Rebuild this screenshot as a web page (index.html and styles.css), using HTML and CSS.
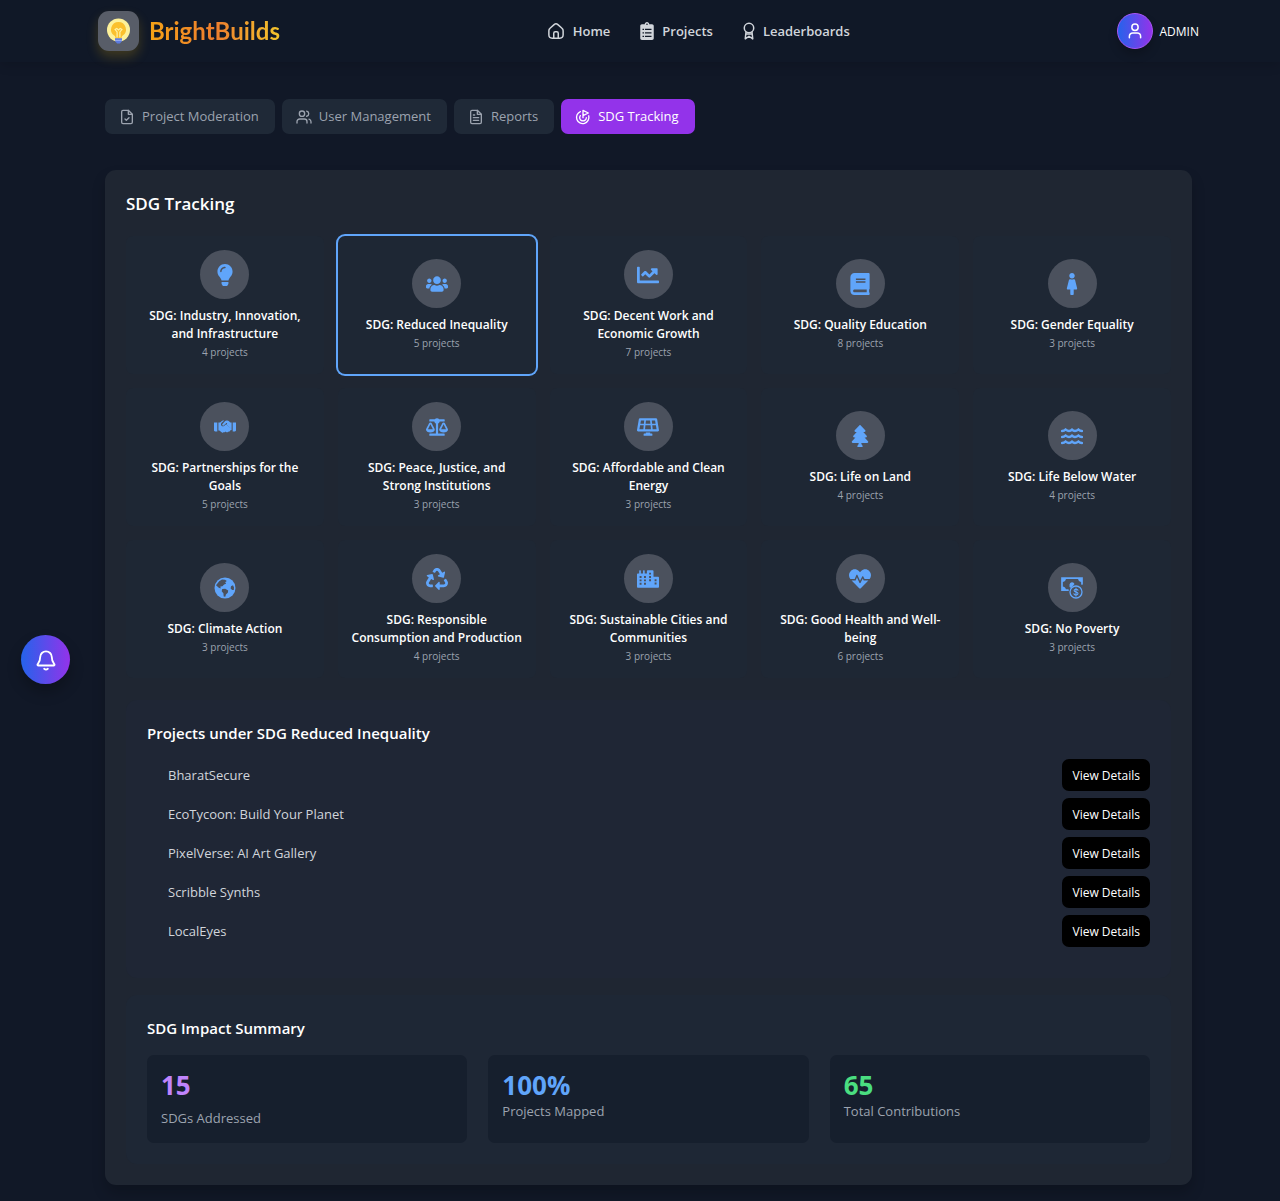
FILE: index.html
```html
<!DOCTYPE html>
<html lang="en">
<head>
<meta charset="utf-8">
<meta name="viewport" content="width=device-width, initial-scale=1">
<title>BrightBuilds – SDG Tracking</title>
<link rel="stylesheet" href="styles.css">
</head>
<body>
<header class="topbar">
  <a class="brand" href="#">
    <span class="brand-mark">
      <svg viewBox="0 0 26 26" width="26" height="26" aria-hidden="true">
        <circle cx="12.500" cy="12" r="11.500" fill="#fdf19a"/>
        <path d="M12.500 4a7.500 7.500 0 0 0-4.300 13.600c1 .8 1.300 1.500 1.300 2.900h6c0-1.400.3-2.100 1.300-2.900A7.500 7.500 0 0 0 12.500 4z" fill="#fbc02d"/>
        <path d="M11.100 19.500V14l-2-2.500 1.700-1 1.700 1.500 1.700-1.500 1.700 1-2 2.500v5.500" fill="none" stroke="#fff3a6" stroke-width="1.200"/>
        <path d="M9 20.200h7v2.800l-2 2.500h-3l-2-2.500z" fill="#5c7be0"/>
        <path d="M9 22.400h7" stroke="#a9b9f2" stroke-width=".8"/>
      </svg>
    </span>
    <span class="brand-name">BrightBuilds</span>
  </a>
  <nav class="nav">
    <a href="#"><svg class="line" viewBox="0 0 24 24" width="18" height="18" aria-hidden="true"><path d="M2.500 11.500c0-1.400.4-2.200 1.500-3.100l5.500-4.900c1.600-1.400 3.400-1.400 5 0L20 8.400c1.100.9 1.500 1.700 1.500 3.100V17c0 3-1.200 4.500-4.500 4.500H7c-3.300 0-4.500-1.500-4.500-4.500z"/><path d="M9 21.500V15c0-1.400.7-2 2-2h2c1.300 0 2 .6 2 2v6.500"/></svg>Home</a>
    <a href="#"><svg viewBox="0 0 384 512" width="14" height="18" aria-hidden="true"><path fill="currentColor" fill-rule="evenodd" d="M336 64h-80c0-35.300-28.700-64-64-64s-64 28.700-64 64H48C21.500 64 0 85.500 0 112v352c0 26.500 21.500 48 48 48h288c26.500 0 48-21.500 48-48V112c0-26.500-21.500-48-48-48zM192 40c13.300 0 24 10.700 24 24s-10.700 24-24 24-24-10.700-24-24 10.700-24 24-24zM64 190h44v36H64zm72 0h184v36H136zM64 290h44v36H64zm72 0h184v36H136zM64 390h44v36H64zm72 0h184v36H136z"/></svg>Projects</a>
    <a href="#"><svg class="line" viewBox="0 0 16 24" width="12" height="18" aria-hidden="true"><circle cx="8" cy="8" r="6.300"/><path d="M4 13.500 3 22.500l5-3.500 5 3.500-1-9M4 16h8"/></svg>Leaderboards</a>
  </nav>
  <a class="account" href="#">
    <span class="avatar"><svg class="line" viewBox="0 0 24 24" width="18" height="18" aria-hidden="true"><circle cx="12" cy="7" r="4.200"/><path d="M4.500 21v-2a4.500 4.500 0 0 1 4.500-4.500h6a4.500 4.500 0 0 1 4.500 4.500v2"/></svg></span>
    ADMIN
  </a>
</header>

<main class="page">
  <div class="tabs">
    <button class="tab" type="button"><svg class="line" viewBox="0 0 24 24" width="16" height="16" aria-hidden="true"><path d="M14 2H6a2 2 0 0 0-2 2v16a2 2 0 0 0 2 2h12a2 2 0 0 0 2-2V8z"/><path d="M14 2v6h6M9 15l2 2 4-4"/></svg>Project Moderation</button>
    <button class="tab" type="button"><svg class="line" viewBox="0 0 24 24" width="16" height="16" aria-hidden="true"><circle cx="9" cy="7" r="4"/><path d="M1.500 21v-2a4 4 0 0 1 4-4h7a4 4 0 0 1 4 4v2M22.500 21v-2a4 4 0 0 0-3-3.900M16 3.100a4 4 0 0 1 0 7.800"/></svg>User Management</button>
    <button class="tab" type="button"><svg class="line" viewBox="0 0 24 24" width="16" height="16" aria-hidden="true"><path d="M14 2H6a2 2 0 0 0-2 2v16a2 2 0 0 0 2 2h12a2 2 0 0 0 2-2V8z"/><path d="M14 2v6h6M8 9h2M8 13h8M8 17h8"/></svg>Reports</button>
    <button class="tab tab-active" type="button"><svg class="line" viewBox="0 0 24 24" width="16" height="16" aria-hidden="true"><path d="M12 13V2l8 4-8 4"/><path d="M20.600 10.200a9.300 9.300 0 1 1-12.500-6.300"/><path d="M8 9.900A5 5 0 1 0 17 13"/></svg>SDG Tracking</button>
  </div>

  <section class="panel">
    <h1>SDG Tracking</h1>
    <div class="goals">
      <button class="goal" type="button"><span class="disc"><svg viewBox="0 0 352 512" aria-hidden="true"><path d="M96.060 454.350c.01 6.290 1.870 12.450 5.360 17.690l17.090 25.690a31.990 31.990 0 0 0 26.640 14.280h61.710a31.990 31.990 0 0 0 26.640-14.280l17.090-25.690a31.989 31.989 0 0 0 5.360-17.690l.04-38.350H96.010l.05 38.350zM0 176c0 44.370 16.450 84.850 43.560 115.780 16.520 18.850 42.360 58.230 52.210 91.450.04.26.07.52.11.78h160.240c.04-.26.07-.51.11-.78 9.850-33.220 35.690-72.600 52.210-91.450C335.550 260.850 352 220.370 352 176 352 78.610 272.910-.3 175.450 0 73.440.31 0 82.970 0 176zm176-80c-44.110 0-80 35.890-80 80 0 8.840-7.160 16-16 16s-16-7.160-16-16c0-61.760 50.240-112 112-112 8.840 0 16 7.160 16 16s-7.160 16-16 16z"/></svg></span><span class="goal-name">SDG: Industry, Innovation, and Infrastructure</span><span class="goal-count">4 projects</span></button>
      <button class="goal goal-selected" type="button"><span class="disc"><svg viewBox="0 0 640 512" aria-hidden="true"><path d="M96 224c35.300 0 64-28.700 64-64s-28.700-64-64-64-64 28.700-64 64 28.700 64 64 64zm448 0c35.300 0 64-28.700 64-64s-28.700-64-64-64-64 28.700-64 64 28.700 64 64 64zm32 32h-64c-17.600 0-33.500 7.100-45.100 18.600 40.300 22.100 68.900 62 75.100 109.400h66c17.700 0 32-14.300 32-32v-32c0-35.300-28.700-64-64-64zm-256 0c61.900 0 112-50.100 112-112S381.900 32 320 32 208 82.100 208 144s50.100 112 112 112zm76.800 32h-8.300c-20.800 10-43.900 16-68.500 16s-47.600-6-68.500-16h-8.300C179.600 288 128 339.600 128 403.200V432c0 26.500 21.500 48 48 48h288c26.500 0 48-21.500 48-48v-28.800c0-63.600-51.600-115.200-115.200-115.200zm-223.700-13.400C161.500 263.100 145.600 256 128 256H64c-35.300 0-64 28.700-64 64v32c0 17.700 14.300 32 32 32h65.900c6.300-47.400 34.900-87.300 75.200-109.400z"/></svg></span><span class="goal-name">SDG: Reduced Inequality</span><span class="goal-count">5 projects</span></button>
      <button class="goal" type="button"><span class="disc"><svg viewBox="0 0 512 512" aria-hidden="true"><path d="M496 384H64V80c0-8.840-7.160-16-16-16H16C7.160 64 0 71.160 0 80v336c0 17.670 14.330 32 32 32h464c8.840 0 16-7.160 16-16v-32c0-8.840-7.160-16-16-16zM464 96H345.940c-21.380 0-32.090 25.850-16.970 40.970l32.400 32.400L288 242.750l-73.370-73.370c-12.500-12.500-32.760-12.500-45.250 0l-68.690 68.690c-6.250 6.250-6.250 16.380 0 22.630l22.620 22.620c6.250 6.250 16.380 6.250 22.630 0L192 237.250l73.370 73.370c12.500 12.500 32.760 12.500 45.250 0l96-96 32.400 32.400c15.120 15.120 40.970 4.410 40.970-16.970V112c.01-8.840-7.150-16-15.990-16z"/></svg></span><span class="goal-name">SDG: Decent Work and Economic Growth</span><span class="goal-count">7 projects</span></button>
      <button class="goal" type="button"><span class="disc"><svg viewBox="0 0 448 512" aria-hidden="true"><path d="M448 360V24c0-13.300-10.700-24-24-24H96C43 0 0 43 0 96v320c0 53 43 96 96 96h328c13.300 0 24-10.700 24-24v-16c0-7.500-3.500-14.300-8.900-18.700-4.200-15.400-4.200-59.300 0-74.700 5.400-4.300 8.900-11.100 8.900-18.600zM128 134c0-3.300 2.700-6 6-6h212c3.300 0 6 2.700 6 6v20c0 3.300-2.700 6-6 6H134c-3.300 0-6-2.700-6-6v-20zm0 64c0-3.300 2.700-6 6-6h212c3.300 0 6 2.700 6 6v20c0 3.300-2.700 6-6 6H134c-3.300 0-6-2.700-6-6v-20zm253.400 250H96c-17.700 0-32-14.300-32-32 0-17.600 14.400-32 32-32h285.400c-1.900 17.100-1.900 46.900 0 64z"/></svg></span><span class="goal-name">SDG: Quality Education</span><span class="goal-count">8 projects</span></button>
      <button class="goal" type="button"><span class="disc"><svg viewBox="0 0 256 512" aria-hidden="true"><path d="M128 0c35.346 0 64 28.654 64 64s-28.654 64-64 64c-35.346 0-64-28.654-64-64S92.654 0 128 0m119.283 354.179l-48-192A24 24 0 0 0 176 144h-11.360c-22.711 10.443-49.590 10.894-73.280 0H80a24 24 0 0 0-23.283 18.179l-48 192C4.935 369.305 16.383 384 32 384h56v104c0 13.255 10.745 24 24 24h32c13.255 0 24-10.745 24-24V384h56c15.591 0 27.071-14.671 23.283-29.821z"/></svg></span><span class="goal-name">SDG: Gender Equality</span><span class="goal-count">3 projects</span></button>

      <button class="goal" type="button"><span class="disc"><svg viewBox="0 0 640 512" aria-hidden="true"><path d="M0 128h96v256H32c-18 0-32-14-32-32zM544 128h96v224c0 18-14 32-32 32h-64z"/><path d="M128 128h48l64-52c12-8 24-12 38-12h20l-76 70c-24 22-26 60-4 84 22 22 58 26 82 4l50-46 152 124c14 12 16 32 4 46-10 12-26 14-38 8 2 14-4 28-18 34-14 8-28 4-38-4-4 14-18 26-34 26-10 0-20-4-28-10l-14-10c-12 16-34 20-52 10-8 22-34 30-54 18l-74-58h-28z"/><path d="M324 84c8-12 24-20 40-20h26c14 0 28 6 38 16l48 48h36v176h-14L362 182l14-12c14-14-6-36-22-24l-72 64c-12 10-28 8-38-2-10-12-10-28 2-40z"/></svg></span><span class="goal-name">SDG: Partnerships for the Goals</span><span class="goal-count">5 projects</span></button>
      <button class="goal" type="button"><span class="disc"><svg viewBox="0 0 640 512" aria-hidden="true"><path d="M256 336h-.02c0-16.180 1.340-8.730-85.050-181.510-17.650-35.290-68.190-35.360-85.870 0C-2.060 328.750.02 320.330.02 336H0c0 44.180 57.310 80 128 80s128-35.820 128-80zM128 176l72 144H56l72-144zm511.980 160c0-16.180 1.340-8.730-85.050-181.510-17.650-35.290-68.190-35.360-85.870 0-87.120 174.260-85.040 165.840-85.040 181.510H384c0 44.180 57.310 80 128 80s128-35.820 128-80h-.02zM440 320l72-144 72 144H440zm88 128H352V153.250c23.510-10.290 41.160-31.480 46.390-57.250H528c8.840 0 16-7.160 16-16V48c0-8.840-7.160-16-16-16H383.640C369.040 12.680 346.090 0 320 0s-49.040 12.680-63.640 32H112c-8.840 0-16 7.160-16 16v32c0 8.840 7.160 16 16 16h129.610c5.230 25.760 22.870 46.960 46.390 57.250V448H112c-8.840 0-16 7.160-16 16v32c0 8.840 7.160 16 16 16h416c8.840 0 16-7.160 16-16v-32c0-8.840-7.160-16-16-16z"/></svg></span><span class="goal-name">SDG: Peace, Justice, and Strong Institutions</span><span class="goal-count">3 projects</span></button>
      <button class="goal" type="button"><span class="disc"><svg viewBox="0 0 640 512" aria-hidden="true"><path d="M431.980 448.010l-47.970.05V416h-128v32.210l-47.980.05c-8.820.01-15.970 7.160-15.980 15.990l-.05 31.730c-.01 8.850 7.170 16.030 16.020 16.020l223.960-.26c8.820-.01 15.970-7.160 15.980-15.980l.04-31.730c.01-8.850-7.170-16.030-16.020-16.020zM585.200 26.740C582.580 11.310 568.990 0 553.060 0H86.930C71 0 57.410 11.310 54.790 26.740-3.320 369.160.04 348.080.03 352c-.03 17.320 14.290 32 32.600 32h574.740c18.230 0 32.510-14.560 32.590-31.790.02-4.080 3.350 16.950-54.760-325.470zM259.830 64h120.330l9.770 96H250.060l9.770-96zm-75.170 256H71.090L90.100 208h105.970l-11.410 112zm16.290-160H98.240l16.290-96h96.190l-9.770 96zm32.820 160l11.400-112h149.650l11.400 112H233.770zm195.500-256h96.190l16.290 96H439.040l-9.770-96zm26.060 256l-11.400-112H549.900l19.010 112H455.330z"/></svg></span><span class="goal-name">SDG: Affordable and Clean Energy</span><span class="goal-count">3 projects</span></button>
      <button class="goal" type="button"><span class="disc"><svg viewBox="0 0 384 512" aria-hidden="true"><path d="M378.310 378.490L298.420 288h30.630c9.010 0 16.980-5 20.780-13.060 3.800-8.040 2.550-17.260-3.280-24.050L268.420 160h28.890c9.100 0 17.300-5.350 20.860-13.610 3.520-8.130 1.860-17.590-4.240-24.080L203.660 4.830c-6.030-6.450-17.280-6.450-23.320 0L70.060 122.310c-6.100 6.490-7.750 15.950-4.240 24.080C69.380 154.650 77.590 160 86.690 160h28.890l-78.140 90.910c-5.810 6.780-7.060 15.990-3.270 24.040C37.970 283 45.930 288 54.950 288h30.630L5.690 378.490c-6 6.790-7.360 16.090-3.560 24.260 3.750 8.050 12 13.250 21.010 13.250H160v24.450l-30.290 48.400c-5.320 10.640 2.420 23.160 14.310 23.160h95.960c11.890 0 19.630-12.520 14.310-23.160L224 440.450V416h136.860c9.010 0 17.260-5.200 21.010-13.250 3.800-8.170 2.440-17.470-3.560-24.260z"/></svg></span><span class="goal-name">SDG: Life on Land</span><span class="goal-count">4 projects</span></button>
      <button class="goal" type="button"><span class="disc"><svg viewBox="0 0 22 20" aria-hidden="true"><path class="stroke" stroke-width="2.400" d="M1 5c1.500 0 2.500-.4 3.500-1.400C6 4.600 7 5 8 5s2-.4 3-1.400C12 4.600 13 5 14 5s2-.4 3.500-1.400C18.500 4.600 19.500 5 21 5M1 11c1.500 0 2.500-.4 3.500-1.400C6 10.600 7 11 8 11s2-.4 3-1.400c1 1 2 1.400 3 1.400s2-.4 3.500-1.400c1 1 2 1.400 3.500 1.400M1 17c1.500 0 2.500-.4 3.500-1.400C6 16.600 7 17 8 17s2-.4 3-1.400c1 1 2 1.400 3 1.400s2-.4 3.500-1.400c1 1 2 1.400 3.500 1.400"/></svg></span><span class="goal-name">SDG: Life Below Water</span><span class="goal-count">4 projects</span></button>

      <button class="goal" type="button"><span class="disc"><svg viewBox="0 0 22 22" aria-hidden="true"><circle cx="11" cy="11" r="10.500"/><path class="cut" d="M5.200 4.200 8 2.600l3 .2 1.800 1.300-1.600 1.100.9 1.500-2 .8-1.700 1.800-2 .3.300 1.900-1.900-.7L2 8.200zM8.200 12l3-.2 3 1.600-.4 2.400-1.900 1.600-.6 2.300-1.600-.2-.3-3.300-1.700-2zM17 9.200l2-1 1 2.400-.2 2.300-1.700.2-1.500-1.700z"/></svg></span><span class="goal-name">SDG: Climate Action</span><span class="goal-count">3 projects</span></button>
      <button class="goal" type="button"><span class="disc"><svg viewBox="0 0 512 512" aria-hidden="true"><path d="M184.561 261.903c3.232 13.997-12.123 24.635-24.068 17.168l-40.736-25.455-50.867 81.402C55.606 356.273 70.960 384 96.012 384H148c6.627 0 12 5.373 12 12v40c0 6.627-5.373 12-12 12H96.115c-75.334 0-121.302-83.048-81.408-146.880l50.822-81.388-40.725-25.448c-12.081-7.547-8.966-25.961 4.879-29.158l110.237-25.450c8.611-1.988 17.201 3.381 19.189 11.990l25.452 110.237zm98.561-182.915l41.289 66.076-40.740 25.457c-12.051 7.528-9 25.953 4.879 29.158l110.237 25.450c8.672 1.999 17.215-3.438 19.189-11.990l25.450-110.237c3.197-13.844-11.990-24.719-24.068-17.168l-40.687 25.424-41.263-66.082c-37.521-60.033-125.209-60.171-162.816 0l-17.963 28.766c-3.510 5.620-1.800 13.021 3.820 16.533l33.919 21.195c5.620 3.512 13.024 1.803 16.536-3.817l17.961-28.743c12.712-20.341 41.973-19.676 54.257-.022zM497.288 301.120l-27.515-44.065c-3.511-5.623-10.916-7.334-16.538-3.821l-33.861 21.159c-5.620 3.512-7.330 10.915-3.818 16.536l27.564 44.112c13.257 21.211-2.057 48.960-27.136 48.960H320V336.020c0-14.213-17.242-21.383-27.313-11.313l-80 79.981c-6.249 6.248-6.249 16.379 0 22.627l80 79.989C302.689 517.308 320 510.300 320 495.989V448h95.880c75.274 0 121.335-82.997 81.408-146.880z"/></svg></span><span class="goal-name">SDG: Responsible Consumption and Production</span><span class="goal-count">4 projects</span></button>
      <button class="goal" type="button"><span class="disc"><svg viewBox="0 0 640 512" aria-hidden="true"><path fill-rule="evenodd" d="M616 192H480V24c0-13-11-24-24-24H312c-13 0-24 11-24 24v72h-64V16c0-9-7-16-16-16h-16c-9 0-16 7-16 16v80h-64V16c0-9-7-16-16-16H80c-9 0-16 7-16 16v80H24c-13 0-24 11-24 24v360c0 18 14 32 32 32h576c18 0 32-14 32-32V216c0-13-11-24-24-24zM76 172h56v56H76zm0 96h56v56H76zm0 96h56v56H76zM204 172h56v56h-56zm0 96h56v56h-56zm0 96h56v56h-56zM352 72h56v56h-56zm0 96h56v56h-56zm0 96h56v56h-56zM512 264h56v56h-56zm0 96h56v56h-56z"/></svg></span><span class="goal-name">SDG: Sustainable Cities and Communities</span><span class="goal-count">3 projects</span></button>
      <button class="goal" type="button"><span class="disc"><svg viewBox="0 0 512 512" aria-hidden="true"><path d="M320.200 243.800l-49.700 99.400c-6 12.100-23.400 11.700-28.900-.6l-56.900-126.300-30 71.700H60.600l182.500 186.500c7.100 7.300 18.600 7.300 25.700 0L451.400 288H342.300l-22.100-44.200zM473.700 73.900l-2.400-2.500c-51.500-52.600-135.800-52.600-187.400 0L256 100l-27.900-28.500c-51.500-52.700-135.900-52.700-187.400 0l-2.400 2.400C-10.400 123.700-12.500 203 31 256h102.400l35.900-86.200c5.400-12.900 23.600-13.100 29.200-.4l58.200 129.300 49-97.900c5.900-11.800 22.700-11.800 28.600 0l27.600 55.200H481c43.500-53 41.400-132.300-7.300-182.100z"/></svg></span><span class="goal-name">SDG: Good Health and Well-being</span><span class="goal-count">6 projects</span></button>
      <button class="goal" type="button"><span class="disc"><svg viewBox="0 0 22 22" aria-hidden="true"><path class="stroke" stroke-width="1.700" d="M7 13.200H1V1.200h20V7"/><path d="M1 1h4a4 4 0 0 1-4 4zM21 1h-4a4 4 0 0 0 4 4zM1 13.500V9.500a4 4 0 0 1 4 4zM8.500 7.500a2.600 2.600 0 0 1 5-.5l-3.500 4A3 3 0 0 1 8.500 7.500z"/><circle class="stroke" stroke-width="1.300" cx="15" cy="15" r="6"/><path class="stroke" stroke-width="1.100" d="M17 13.200c-.4-.8-1-1-2-1s-1.900.4-1.900 1.400c0 2 3.900.8 3.900 2.900 0 1-.9 1.400-2 1.400s-1.800-.4-2.100-1.200M15 11v8"/></svg></span><span class="goal-name">SDG: No Poverty</span><span class="goal-count">3 projects</span></button>
    </div>

    <section class="box projects">
      <h2>Projects under SDG Reduced Inequality</h2>
      <ul class="project-list">
        <li>BharatSecure<button class="details" type="button">View Details</button></li>
        <li>EcoTycoon: Build Your Planet<button class="details" type="button">View Details</button></li>
        <li>PixelVerse: AI Art Gallery<button class="details" type="button">View Details</button></li>
        <li>Scribble Synths<button class="details" type="button">View Details</button></li>
        <li>LocalEyes<button class="details" type="button">View Details</button></li>
      </ul>
    </section>

    <section class="box summary">
      <h2>SDG Impact Summary</h2>
      <div class="stats">
        <div class="stat stat-spaced"><strong class="purple">15</strong><span>SDGs Addressed</span></div>
        <div class="stat"><strong class="blue">100%</strong><span>Projects Mapped</span></div>
        <div class="stat"><strong class="green">65</strong><span>Total Contributions</span></div>
      </div>
    </section>
  </section>
</main>

<button class="bell" type="button" aria-label="Notifications"><svg class="line" viewBox="0 0 24 24" width="22" height="22" aria-hidden="true"><path d="M12 2.500a6.300 6.300 0 0 0-6.300 6.300c0 4.700-1.500 6.200-2.700 7.600-.6.8-.2 1.600.7 1.600h16.600c.9 0 1.300-.8.7-1.600-1.200-1.400-2.700-2.900-2.700-7.600A6.300 6.300 0 0 0 12 2.500zM10 21.500c1 .8 3 .8 4 0"/></svg></button>
</body>
</html>
```
FILE: styles.css
```css
* { box-sizing: border-box; }

body {
  margin: 0;
  background: #111827;
  color: #fff;
  font: 13px/21px "Open Sans", "Noto Sans", sans-serif;
}

button { font: inherit; color: inherit; border: 0; cursor: pointer; }
a { color: inherit; text-decoration: none; }
h1, h2, ul { margin: 0; padding: 0; }
svg { display: block; flex: none; }
.line { fill: none; stroke: currentColor; stroke-width: 2; stroke-linecap: round; stroke-linejoin: round; }

.topbar {
  display: flex;
  align-items: center;
  justify-content: space-between;
  height: 62px;
  padding: 0 81px 0 98px;
  background: #101827;
  box-shadow: 0 4px 10px rgba(0, 0, 0, .12);
}
.brand { display: flex; align-items: center; gap: 10px; }
.brand-mark {
  display: grid;
  place-items: center;
  width: 41px;
  height: 40px;
  border-radius: 11px;
  background: #585d68;
  box-shadow: 0 6px 12px rgba(234, 179, 8, .22);
}
.brand-name {
  font-family: Lato, sans-serif;
  font-size: 24px;
  line-height: 36px;
  font-weight: 700;
  background: linear-gradient(90deg, #f5a316, #ee7d2e 50%, #f4c52c);
  -webkit-background-clip: text;
  background-clip: text;
  color: transparent;
}
.nav { display: flex; gap: 30px; font-weight: 600; color: #d1d5db; }
.nav a { display: flex; align-items: center; gap: 8px; }
.account { display: flex; align-items: center; gap: 7px; font-size: 12px; font-weight: 500; }
.avatar {
  display: grid;
  place-items: center;
  width: 36px;
  height: 36px;
  border: 1px solid #a855f7;
  border-radius: 50%;
  background: linear-gradient(90deg, #2563eb, #9333ea);
  box-shadow: 0 6px 10px rgba(0, 0, 0, .2);
}

.page { padding: 37px 88px 15px 105px; }
.tabs { display: flex; gap: 7px; margin-bottom: 36px; }
.tab {
  display: flex;
  align-items: center;
  gap: 7px;
  height: 35px;
  padding: 0 16px 0 14px;
  border-radius: 7px;
  background: #1f2937;
  color: #9ca3af;
}
.tab-active { background: #9333ea; color: #fff; }

.panel {
  padding: 21px;
  border-radius: 11px;
  background: #1f2632;
  box-shadow: 0 8px 14px rgba(0, 0, 0, .2);
}
h1 { margin-bottom: 20px; font-size: 17px; line-height: 25px; font-weight: 600; }
h2 { font-size: 15px; line-height: 25px; font-weight: 600; }

.goals { display: grid; grid-template-columns: repeat(5, 1fr); gap: 14px; margin-bottom: 22px; }
.goal {
  display: flex;
  flex-direction: column;
  align-items: center;
  justify-content: center;
  min-height: 138px;
  padding: 14px 11px;
  border-radius: 7px;
  background: #1e2734;
}
.goal-selected { box-shadow: 0 0 0 2px #60a5fa; }
.disc {
  display: grid;
  place-items: center;
  width: 49px;
  height: 49px;
  margin-bottom: 8px;
  border-radius: 50%;
  background: #4b515d;
}
.disc svg { width: 22px; height: 22px; fill: #60a5fa; }
.disc .stroke { fill: none; stroke: #60a5fa; stroke-linecap: round; }
.disc .cut { fill: #4b515d; }
.goal-name { font-size: 12px; line-height: 18px; font-weight: 600; }
.goal-count { margin-top: 2px; font-size: 10px; line-height: 15px; color: #9ca3af; }

.box { padding: 21px; border-radius: 11px; }
.projects { margin-bottom: 17px; background: #1f2635; }
.project-list { display: grid; gap: 7px; margin: 13px 0 10px; padding-left: 21px; list-style: none; }
.project-list li { display: flex; align-items: center; justify-content: space-between; color: #d1d5db; }
.details {
  height: 32px;
  padding: 0 10px;
  border-radius: 7px;
  background: #000;
  color: #fff;
  font-size: 12px;
}

.summary { background: #1e2735; }
.stats { display: grid; grid-template-columns: repeat(3, 1fr); gap: 21px; margin-top: 14px; }
.stat { display: flex; flex-direction: column; padding: 14px; border-radius: 7px; background: #161f2d; }
.stat strong { font-size: 26px; line-height: 32px; font-weight: 700; }
.stat span { color: #9ca3af; }
.stat-spaced { gap: 7px; }
.purple { color: #c084fc; }
.blue { color: #60a5fa; }
.green { color: #4ade80; }

.bell {
  position: fixed;
  left: 21px;
  top: 635px;
  display: grid;
  place-items: center;
  width: 49px;
  height: 49px;
  padding: 0;
  border-radius: 50%;
  background: linear-gradient(90deg, #2563eb, #9333ea);
  box-shadow: 0 8px 14px rgba(0, 0, 0, .25);
}
```
